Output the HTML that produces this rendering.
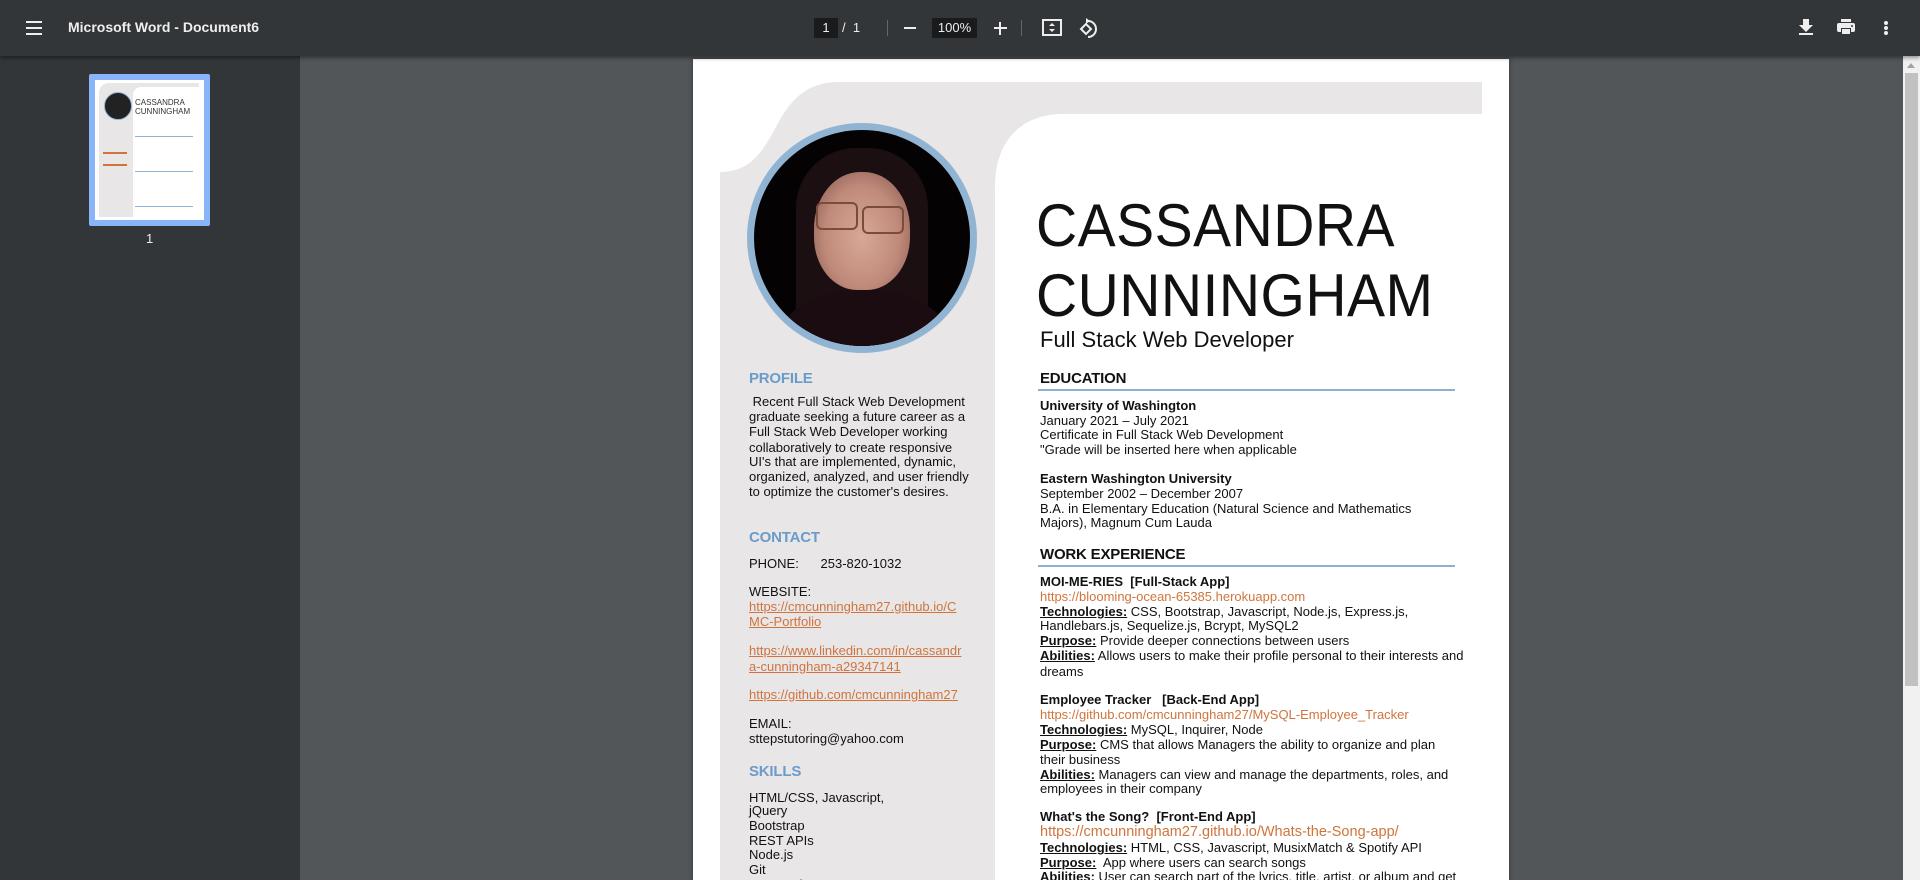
<!DOCTYPE html>
<html><head><meta charset="utf-8"><style>
*{margin:0;padding:0;box-sizing:border-box}
html,body{width:1920px;height:880px;overflow:hidden;background:#525659;font-family:"Liberation Sans",Arial,sans-serif;position:relative}
#tb{position:absolute;left:0;top:0;width:1920px;height:56px;background:#323639;box-shadow:0 2px 4px rgba(0,0,0,.4);z-index:5;color:#f1f1f1}
#side{position:absolute;left:0;top:56px;width:300px;height:824px;background:#323639}
.ab{position:absolute}
#page{position:absolute;left:693px;top:59px;width:816px;height:821px;background:#fff;box-shadow:0 0 4px rgba(0,0,0,.4);overflow:hidden}
.t{position:absolute;font-size:13px;line-height:15px;color:#111;white-space:nowrap}
.h{position:absolute;font-size:15px;font-weight:bold;line-height:15px;white-space:nowrap;letter-spacing:-0.2px}
.lh{color:#6b9bca}
.rh{color:#111}
.a{color:#d0743c}
.u{text-decoration:underline}
b.k{text-decoration:underline;font-weight:bold}
</style></head><body>
<div id="tb">
  <div class="ab" style="left:26px;top:21px;width:16px;height:2px;background:#eee"></div>
  <div class="ab" style="left:26px;top:27px;width:16px;height:2px;background:#eee"></div>
  <div class="ab" style="left:26px;top:33px;width:16px;height:2px;background:#eee"></div>
  <div class="ab" style="left:68px;top:19px;font-size:14px;font-weight:bold;color:#eee">Microsoft Word - Document6</div>
  <div class="ab" style="left:814px;top:18px;width:24px;height:20px;background:#191b1c;color:#eee;font-size:13px;text-align:center;line-height:20px">1</div>
  <div class="ab" style="left:842px;top:18px;color:#eee;font-size:13px;line-height:20px">/&nbsp;&nbsp;1</div>
  <div class="ab" style="left:887px;top:20px;width:1px;height:16px;background:#666"></div>
  <div class="ab" style="left:904px;top:27px;width:12px;height:2px;background:#eee"></div>
  <div class="ab" style="left:932px;top:18px;width:45px;height:20px;background:#191b1c;color:#eee;font-size:13px;text-align:center;line-height:20px">100%</div>
  <div class="ab" style="left:994px;top:27px;width:13px;height:2px;background:#eee"></div>
  <div class="ab" style="left:999px;top:22px;width:2px;height:13px;background:#eee"></div>
  <div class="ab" style="left:1021px;top:20px;width:1px;height:16px;background:#666"></div>
  <svg class="ab" style="left:1041px;top:18px" width="22" height="20" viewBox="0 0 22 20"><rect x="2" y="2" width="18" height="15" fill="none" stroke="#eee" stroke-width="2"/><path d="M11 5l-3 3h6zM11 14l-3-3h6z" fill="#eee"/></svg>
  <svg class="ab" style="left:1077px;top:17px" width="22" height="22" viewBox="0 0 22 22"><path d="M4 12l5-5 5 5-5 5z" fill="none" stroke="#eee" stroke-width="2"/><path d="M11 4a8 8 0 1 1 0 16" fill="none" stroke="#eee" stroke-width="2"/><path d="M9 1v6l4-3z" fill="#eee"/></svg>
  <svg class="ab" style="left:1798px;top:18px" width="16" height="18" viewBox="0 0 16 18"><path d="M5 1h6v6h4l-7 7-7-7h4z" fill="#eee"/><rect x="1" y="15" width="14" height="2" fill="#eee"/></svg>
  <svg class="ab" style="left:1836px;top:18px" width="20" height="18" viewBox="0 0 20 18"><rect x="5" y="1" width="10" height="3" fill="#eee"/><rect x="1" y="5" width="18" height="9" rx="2" fill="#eee"/><rect x="5" y="10" width="10" height="7" fill="#323639"/><rect x="6" y="11" width="8" height="5" fill="#eee"/><circle cx="16" cy="8" r="1" fill="#323639"/></svg>
  <div class="ab" style="left:1884px;top:21px;width:4px;height:4px;border-radius:2px;background:#eee"></div>
  <div class="ab" style="left:1884px;top:26px;width:4px;height:4px;border-radius:2px;background:#eee"></div>
  <div class="ab" style="left:1884px;top:31px;width:4px;height:4px;border-radius:2px;background:#eee"></div>
</div>
<div id="side">
  <div class="ab" style="left:89px;top:18px;width:121px;height:152px;background:#8ab4f8;border-radius:2px"></div>
  <div class="ab" style="left:95px;top:24px;width:109px;height:140px;background:#fff;overflow:hidden">
    <div class="ab" style="left:4px;top:3px;width:100px;height:134px;background:#e8e6e7;border-top-left-radius:10px"></div>
    <div class="ab" style="left:38px;top:7px;width:66px;height:132px;background:#fff;border-top-left-radius:8px"></div>
    <div class="ab" style="left:9px;top:12px;width:28px;height:28px;border-radius:50%;background:#222;border:1px solid #8eb2d3"></div>
    <div class="ab" style="left:40px;top:18px;font-size:8px;line-height:9px;color:#333">CASSANDRA<br>CUNNINGHAM</div>
    <div class="ab" style="left:40px;top:56px;width:58px;height:1px;background:#8eb2d3"></div>
    <div class="ab" style="left:40px;top:91px;width:58px;height:1px;background:#8eb2d3"></div>
    <div class="ab" style="left:8px;top:72px;width:24px;height:2px;background:#d0743c"></div>
    <div class="ab" style="left:8px;top:84px;width:24px;height:2px;background:#d0743c"></div>
    <div class="ab" style="left:40px;top:126px;width:58px;height:1px;background:#8eb2d3"></div>
  </div>
  <div class="ab" style="left:146px;top:175px;color:#eee;font-size:13px">1</div>
</div>
<div class="ab" style="left:1903px;top:56px;width:17px;height:824px;background:#f1f1f1"></div>
<div class="ab" style="left:1907px;top:63px;width:0;height:0;border-left:4px solid transparent;border-right:4px solid transparent;border-bottom:5px solid #a3a3a3"></div>
<div class="ab" style="left:1905px;top:73px;width:13px;height:613px;background:#c1c1c1"></div>

<div id="page">
  <svg class="ab" style="left:0;top:0" width="816" height="821">
    <path d="M27,113 C58,113 70,92 84,66 C98,40 114,23 146,23 L789,23 L789,55 L370,55 C330,55 302,80 302,128 L302,821 L27,821 Z" fill="#e8e6e7"/>
  </svg>
  <div class="ab" style="left:54px;top:64px;width:230px;height:230px;border-radius:50%;background:#92b4d3"></div>
  <div class="ab" style="left:61px;top:71px;width:216px;height:216px;border-radius:50%;overflow:hidden;background:#050203">
    <div class="ab" style="left:42px;top:18px;width:132px;height:220px;border-radius:60px 60px 20px 20px;background:#1c0f12"></div>
    <div class="ab" style="left:60px;top:42px;width:96px;height:118px;border-radius:48% 48% 45% 45%;background:radial-gradient(ellipse at 50% 55%,#d8a896 0%,#c08a7a 55%,#7a4e4a 100%)"></div>
    <div class="ab" style="left:62px;top:72px;width:42px;height:28px;border:2px solid #7a4c3a;border-radius:6px"></div>
    <div class="ab" style="left:108px;top:76px;width:42px;height:28px;border:2px solid #7a4c3a;border-radius:6px"></div>
    <div class="ab" style="left:30px;top:160px;width:160px;height:80px;border-radius:50% 50% 0 0;background:#1a0c10"></div>
  </div>

  <div class="ab" style="left:343px;top:132px;font-size:60px;line-height:70px;color:#111;letter-spacing:0.5px;white-space:nowrap;transform:scaleX(0.95);transform-origin:left">CASSANDRA<br>CUNNINGHAM</div>
  <div class="ab" style="left:347px;top:268px;font-size:22px;line-height:26px;color:#111;white-space:nowrap">Full Stack Web Developer</div>

  <div class="h lh" style="left:56px;top:312px">PROFILE</div>
  <div class="t" style="left:56px;top:335px">&nbsp;Recent Full Stack Web Development</div>
  <div class="t" style="left:56px;top:350px">graduate seeking a future career as a</div>
  <div class="t" style="left:56px;top:365px">Full Stack Web Developer working</div>
  <div class="t" style="left:56px;top:381px">collaboratively to create responsive</div>
  <div class="t" style="left:56px;top:395px">UI's that are implemented, dynamic,</div>
  <div class="t" style="left:56px;top:410px">organized, analyzed, and user friendly</div>
  <div class="t" style="left:56px;top:425px">to optimize the customer's desires.</div>
  <div class="h lh" style="left:56px;top:471px">CONTACT</div>
  <div class="t" style="left:56px;top:497px">PHONE:&nbsp;&nbsp;&nbsp;&nbsp;&nbsp;&nbsp;253-820-1032</div>
  <div class="t" style="left:56px;top:525px">WEBSITE:</div>
  <div class="t a u" style="left:56px;top:540px">https://cmcunningham27.github.io/C</div>
  <div class="t a u" style="left:56px;top:555px">MC-Portfolio</div>
  <div class="t a u" style="left:56px;top:584px">https://www.linkedin.com/in/cassandr</div>
  <div class="t a u" style="left:56px;top:600px">a-cunningham-a29347141</div>
  <div class="t a u" style="left:56px;top:628px">https://github.com/cmcunningham27</div>
  <div class="t" style="left:56px;top:657px">EMAIL:</div>
  <div class="t" style="left:56px;top:672px">sttepstutoring@yahoo.com</div>
  <div class="h lh" style="left:56px;top:705px">SKILLS</div>
  <div class="t" style="left:56px;top:731px">HTML/CSS, Javascript,</div>
  <div class="t" style="left:56px;top:744px">jQuery</div>
  <div class="t" style="left:56px;top:759px">Bootstrap</div>
  <div class="t" style="left:56px;top:774px">REST APIs</div>
  <div class="t" style="left:56px;top:788px">Node.js</div>
  <div class="t" style="left:56px;top:803px">Git</div>
  <div class="t" style="left:56px;top:818px">Express.js</div>

  <div class="h rh" style="left:347px;top:312px">EDUCATION</div>
  <div class="ab" style="left:345px;top:330px;width:417px;height:2px;background:#8eb0d3"></div>
  <div class="t" style="left:347px;top:339px"><b>University of Washington</b></div>
  <div class="t" style="left:347px;top:354px">January 2021 – July 2021</div>
  <div class="t" style="left:347px;top:368px">Certificate in Full Stack Web Development</div>
  <div class="t" style="left:347px;top:383px">"Grade will be inserted here when applicable</div>
  <div class="t" style="left:347px;top:412px"><b>Eastern Washington University</b></div>
  <div class="t" style="left:347px;top:427px">September 2002 – December 2007</div>
  <div class="t" style="left:347px;top:442px">B.A. in Elementary Education (Natural Science and Mathematics</div>
  <div class="t" style="left:347px;top:456px">Majors), Magnum Cum Lauda</div>
  <div class="h rh" style="left:347px;top:488px">WORK EXPERIENCE</div>
  <div class="ab" style="left:345px;top:506px;width:417px;height:2px;background:#8eb0d3"></div>
  <div class="t" style="left:347px;top:515px"><b>MOI-ME-RIES&nbsp; [Full-Stack App]</b></div>
  <div class="t a" style="left:347px;top:530px">https://blooming-ocean-65385.herokuapp.com</div>
  <div class="t" style="left:347px;top:545px"><b class="k">Technologies:</b> CSS, Bootstrap, Javascript, Node.js, Express.js,</div>
  <div class="t" style="left:347px;top:559px">Handlebars.js, Sequelize.js, Bcrypt, MySQL2</div>
  <div class="t" style="left:347px;top:574px"><b class="k">Purpose:</b> Provide deeper connections between users</div>
  <div class="t" style="left:347px;top:589px"><b class="k">Abilities:</b> Allows users to make their profile personal to their interests and</div>
  <div class="t" style="left:347px;top:605px">dreams</div>
  <div class="t" style="left:347px;top:633px"><b>Employee Tracker&nbsp;&nbsp; [Back-End App]</b></div>
  <div class="t a" style="left:347px;top:648px">https://github.com/cmcunningham27/MySQL-Employee_Tracker</div>
  <div class="t" style="left:347px;top:663px"><b class="k">Technologies:</b> MySQL, Inquirer, Node</div>
  <div class="t" style="left:347px;top:678px"><b class="k">Purpose:</b> CMS that allows Managers the ability to organize and plan</div>
  <div class="t" style="left:347px;top:693px">their business</div>
  <div class="t" style="left:347px;top:708px"><b class="k">Abilities:</b> Managers can view and manage the departments, roles, and</div>
  <div class="t" style="left:347px;top:722px">employees in their company</div>
  <div class="t" style="left:347px;top:750px"><b>What's the Song?&nbsp; [Front-End App]</b></div>
  <div class="t a" style="left:347px;top:765px;font-size:14.5px;line-height:17px">https://cmcunningham27.github.io/Whats-the-Song-app/</div>
  <div class="t" style="left:347px;top:781px"><b class="k">Technologies:</b> HTML, CSS, Javascript, MusixMatch &amp; Spotify API</div>
  <div class="t" style="left:347px;top:796px"><b class="k">Purpose:</b>&nbsp; App where users can search songs</div>
  <div class="t" style="left:347px;top:810px"><b class="k">Abilities:</b> User can search part of the lyrics, title, artist, or album and get</div>
</div>
</body></html>
